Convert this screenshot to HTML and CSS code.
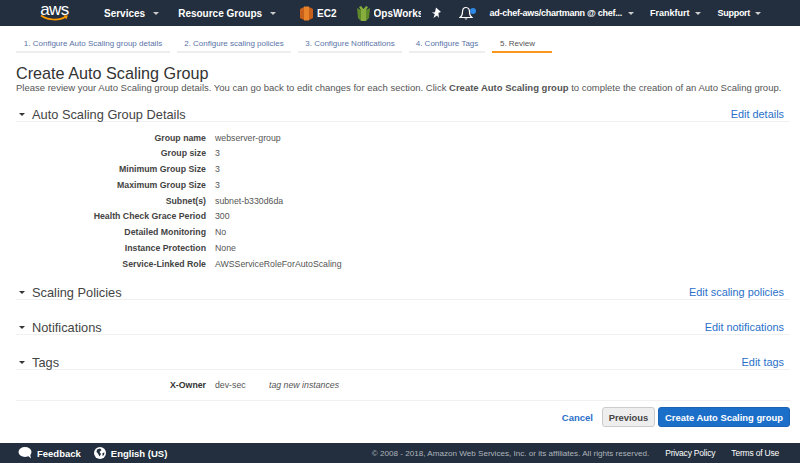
FILE: index.html
```html
<!DOCTYPE html>
<html lang="en">
<head>
    <meta charset="UTF-8">
    <title>Create Auto Scaling Group</title>
    <link rel="stylesheet" href="styles.css">
</head>
<body>
    <header class="topbar">
        <div class="logo">
            <span class="logo-text">aws</span>
            <svg class="logo-smile" width="30" height="8" viewBox="0 0 30 8"><path d="M1 1.500C8 6.500 19 7 26 2.500" fill="none" stroke="#f90" stroke-width="1.600"/><path d="M23.500 1.200l4.400.3-1.600 4z" fill="#f90"/></svg>
        </div>
        <a class="nav-item nav-services">Services <i class="caret"></i></a>
        <a class="nav-item nav-groups">Resource Groups <i class="caret"></i></a>
        <a class="nav-item nav-ec2">
            <svg width="13" height="17" viewBox="0 0 13 17"><path d="M0 4l4-2v13l-4-2z" fill="#c8601c"/><path d="M4 1.500h5v14H4z" fill="#e8832a"/><path d="M9 2l4 2v9l-4 2z" fill="#c8601c"/></svg>
            EC2
        </a>
        <a class="nav-item nav-opsworks">
            <svg width="13" height="17" viewBox="0 0 13 17"><path d="M0 3l4 2v11L1 13z" fill="#5f8a2c"/><path d="M13 3L9 5v11l3-3z" fill="#5f8a2c"/><path d="M2 2l2-1 2.500 3L9 1l2 1-2 3v11H4V5z" fill="#86ad3e"/></svg>
            <span class="opsworks-label">OpsWorks</span>
        </a>
        <svg class="pin" width="12" height="12" viewBox="0 0 12 12"><path d="M5 .5l5 4.500-2.500.8L7.800 11 6 8.500 2.500 11l1.300-4L.8 5.500l3.200-.3z" fill="#fff"/></svg>
        <span class="bell">
            <svg width="14" height="15" viewBox="0 0 14 15"><path d="M7 1.500C4.500 1.500 3.500 3.500 3.500 6c0 3-1 4.500-2.500 5.500h12C11.500 10.500 10.500 9 10.500 6c0-2.500-1-4.500-3.500-4.500z" fill="none" stroke="#fff" stroke-width="1.200"/><path d="M5.500 12.500a1.600 1.600 0 0 0 3 0z" fill="#fff"/></svg>
            <i class="bell-dot"></i>
        </span>
        <a class="nav-item nav-small nav-account">ad-chef-aws/chartmann @ chef... <i class="caret"></i></a>
        <a class="nav-item nav-small nav-region">Frankfurt <i class="caret"></i></a>
        <a class="nav-item nav-small nav-support">Support <i class="caret"></i></a>
    </header>

    <nav class="steps">
        <a class="step step-1">1. Configure Auto Scaling group details</a>
        <a class="step step-2">2. Configure scaling policies</a>
        <a class="step step-3">3. Configure Notifications</a>
        <a class="step step-4">4. Configure Tags</a>
        <a class="step step-active">5. Review</a>
    </nav>

    <main class="content">
        <h1>Create Auto Scaling Group</h1>
        <p class="intro">Please review your Auto Scaling group details. You can go back to edit changes for each section. Click <b>Create Auto Scaling group</b> to complete the creation of an Auto Scaling group.</p>

        <section class="section">
            <div class="section-head"><h2><i class="tri"></i>Auto Scaling Group Details</h2><a class="edit">Edit details</a></div>
            <dl class="details">
                <dt>Group name</dt><dd>webserver-group</dd>
                <dt>Group size</dt><dd>3</dd>
                <dt>Minimum Group Size</dt><dd>3</dd>
                <dt>Maximum Group Size</dt><dd>3</dd>
                <dt>Subnet(s)</dt><dd>subnet-b330d6da</dd>
                <dt>Health Check Grace Period</dt><dd>300</dd>
                <dt>Detailed Monitoring</dt><dd>No</dd>
                <dt>Instance Protection</dt><dd>None</dd>
                <dt>Service-Linked Role</dt><dd>AWSServiceRoleForAutoScaling</dd>
            </dl>
        </section>

        <section class="section section-policies">
            <div class="section-head"><h2><i class="tri"></i>Scaling Policies</h2><a class="edit">Edit scaling policies</a></div>
        </section>

        <section class="section section-notifications">
            <div class="section-head"><h2><i class="tri"></i>Notifications</h2><a class="edit">Edit notifications</a></div>
        </section>

        <section class="section section-tags">
            <div class="section-head"><h2><i class="tri"></i>Tags</h2><a class="edit">Edit tags</a></div>
            <div class="tag-row">
                <b>X-Owner</b><span class="tag-value">dev-sec</span><em>tag new instances</em>
            </div>
        </section>

        <div class="actions">
            <a class="cancel">Cancel</a>
            <button class="btn btn-previous">Previous</button>
            <button class="btn btn-create">Create Auto Scaling group</button>
        </div>
    </main>

    <footer class="footer">
        <a class="foot-link foot-feedback">
            <svg width="14" height="12" viewBox="0 0 14 12"><ellipse cx="7" cy="5" rx="6.500" ry="5" fill="#fff"/><path d="M9 8l4 3.500-1-5z" fill="#fff"/></svg>
            Feedback
        </a>
        <a class="foot-link foot-lang">
            <svg width="12" height="12" viewBox="0 0 12 12"><circle cx="6" cy="6" r="6" fill="#fff"/><path d="M3 2.500l3-1 1.500 1.500-2 2 1.500 2-1.500 2.500L4 6.500 2.500 5zM8.500 6l2-.5-.5 2.500-1.500 1z" fill="#232f3e"/></svg>
            English (US)
        </a>
        <span class="copyright">© 2008 - 2018, Amazon Web Services, Inc. or its affiliates. All rights reserved.</span>
        <a class="foot-legal foot-privacy">Privacy Policy</a>
        <a class="foot-legal foot-terms">Terms of Use</a>
    </footer>
</body>
</html>
```

FILE: styles.css
```css
* {
    box-sizing: border-box;
}

html, body {
    height: 100%;
}

body {
    margin: 0;
    display: flex;
    flex-direction: column;
    overflow: hidden;
    font-family: "Liberation Sans", Arial, sans-serif;
    font-size: 8.750px;
    color: #444;
    background: #fff;
}

/* top bar */
.topbar {
    flex: none;
    height: 26px;
    display: flex;
    align-items: center;
    background: #232f3e;
    color: #fff;
}

.logo {
    width: 29px;
    margin-left: 40px;
    position: relative;
    height: 26px;
}

.logo-text {
    display: block;
    font-size: 17px;
    line-height: 17px;
    padding-top: 1px;
    letter-spacing: -0.5px;
    text-align: center;
}

.logo-smile {
    position: absolute;
    left: 0;
    top: 14px;
}

.nav-item {
    display: flex;
    align-items: center;
    font-size: 10px;
    font-weight: bold;
    white-space: nowrap;
}

.caret {
    display: inline-block;
    width: 0;
    height: 0;
    margin-left: 8px;
    border-left: 3px solid transparent;
    border-right: 3px solid transparent;
    border-top: 3px solid #ccc;
}

.nav-services {
    margin-left: 35px;
}

.nav-groups {
    margin-left: 19px;
}

.nav-ec2 {
    margin-left: 24px;
    gap: 4px;
}

.nav-opsworks {
    margin-left: 20px;
    gap: 4px;
}

.opsworks-label {
    display: block;
    width: 47px;
    overflow: hidden;
}

.pin {
    margin-left: 10px;
}

.bell {
    position: relative;
    display: flex;
    margin-left: 16px;
}

.bell-dot {
    position: absolute;
    right: -3px;
    top: 2px;
    width: 6px;
    height: 6px;
    border-radius: 50%;
    background: #2e8ae6;
}

.nav-small {
    font-size: 9px;
}

.nav-small .caret {
    margin-left: 5px;
}

.nav-account {
    margin-left: 17px;
    letter-spacing: -0.25px;
}

.nav-account .caret {
    margin-left: 6px;
}

.nav-region {
    margin-left: 16px;
}

.nav-support {
    margin-left: 17px;
    letter-spacing: -0.3px;
}

/* wizard steps */
.steps {
    flex: none;
    display: flex;
    gap: 7px;
    height: 27px;
    padding-left: 16px;
}

.step {
    display: flex;
    align-items: flex-end;
    justify-content: center;
    height: 27px;
    padding-bottom: 3px;
    font-size: 8px;
    color: #5a74a8;
    border-bottom: 2px solid #eee;
}

.step-1 {
    width: 154px;
}

.step-2 {
    width: 114px;
}

.step-3 {
    width: 104px;
}

.step-4 {
    width: 76px;
}

.step-active {
    width: 60px;
    padding-right: 9px;
    color: #555;
    border-bottom-color: #f7981d;
}

/* page content */
.content {
    flex: 1;
    padding: 11px 10px 0 16px;
}

h1 {
    margin: 0;
    font-size: 16.200px;
    line-height: 18px;
    font-weight: normal;
    color: #333;
}

.intro {
    margin: 0;
    font-size: 9.500px;
    line-height: 12px;
    color: #555;
    white-space: nowrap;
}

.section-head {
    display: flex;
    justify-content: space-between;
    align-items: flex-end;
    height: 17px;
    padding-right: 6px;
    border-bottom: 1px solid #f0f0f0;
}

.section {
    margin-top: 11px;
}

.section-policies {
    margin-top: 10.800px;
}

.section-notifications,
.section-tags {
    margin-top: 18px;
}

h2 {
    margin: 0;
    display: flex;
    align-items: center;
    font-size: 12.800px;
    line-height: 13px;
    font-weight: normal;
    color: #444;
}

.tri {
    width: 0;
    height: 0;
    margin: 0 7px 0 3px;
    border-left: 3.500px solid transparent;
    border-right: 3.500px solid transparent;
    border-top: 3.500px solid #333;
}

.edit {
    font-size: 10.900px;
    line-height: 13px;
    color: #2a70c9;
}

.details {
    display: grid;
    grid-template-columns: 190px 1fr;
    column-gap: 9px;
    margin: 8.700px 0 0;
    line-height: 15.750px;
}

.details dt {
    text-align: right;
    font-weight: bold;
    color: #444;
}

.details dd {
    margin: 0;
    color: #555;
}

.tag-row {
    display: flex;
    height: 31px;
    align-items: center;
    padding-left: 145px;
    border-bottom: 1px solid #f0f0f0;
    color: #555;
}

.tag-row b {
    width: 45px;
    color: #333;
    text-align: right;
}

.tag-value {
    width: 54px;
    margin-left: 9px;
}

.actions {
    display: flex;
    justify-content: flex-end;
    align-items: center;
    gap: 10px;
    margin-top: 6px;
}

.cancel {
    margin-right: -1px;
    font-size: 9.500px;
    font-weight: bold;
    color: #2a70c9;
}

.btn {
    height: 20px;
    border-radius: 3px;
    font-family: inherit;
    font-size: 9.400px;
    font-weight: bold;
    padding: 0;
}

.btn-previous {
    width: 53px;
    margin-right: -7px;
    color: #444;
    background: #eee;
    border: 1px solid #ccc;
}

.btn-create {
    width: 132px;
    color: #fff;
    background: #1c6fc9;
    border: 1px solid #1a62b4;
}

/* footer */
.footer {
    flex: none;
    height: 20px;
    display: flex;
    align-items: center;
    background: #232f3e;
    color: #fff;
}

.foot-link {
    display: flex;
    align-items: center;
    gap: 5px;
    font-size: 9.500px;
    font-weight: bold;
}

.foot-feedback {
    margin-left: 18px;
}

.foot-lang {
    margin-left: 13px;
}

.copyright {
    margin-left: auto;
    color: #aeb4bc;
    font-size: 8.100px;
}

.foot-legal {
    margin-left: 16px;
    font-size: 8.500px;
}

.foot-privacy {
    letter-spacing: -0.2px;
}

.foot-terms {
    margin-right: 21px;
    letter-spacing: -0.2px;
}
```
